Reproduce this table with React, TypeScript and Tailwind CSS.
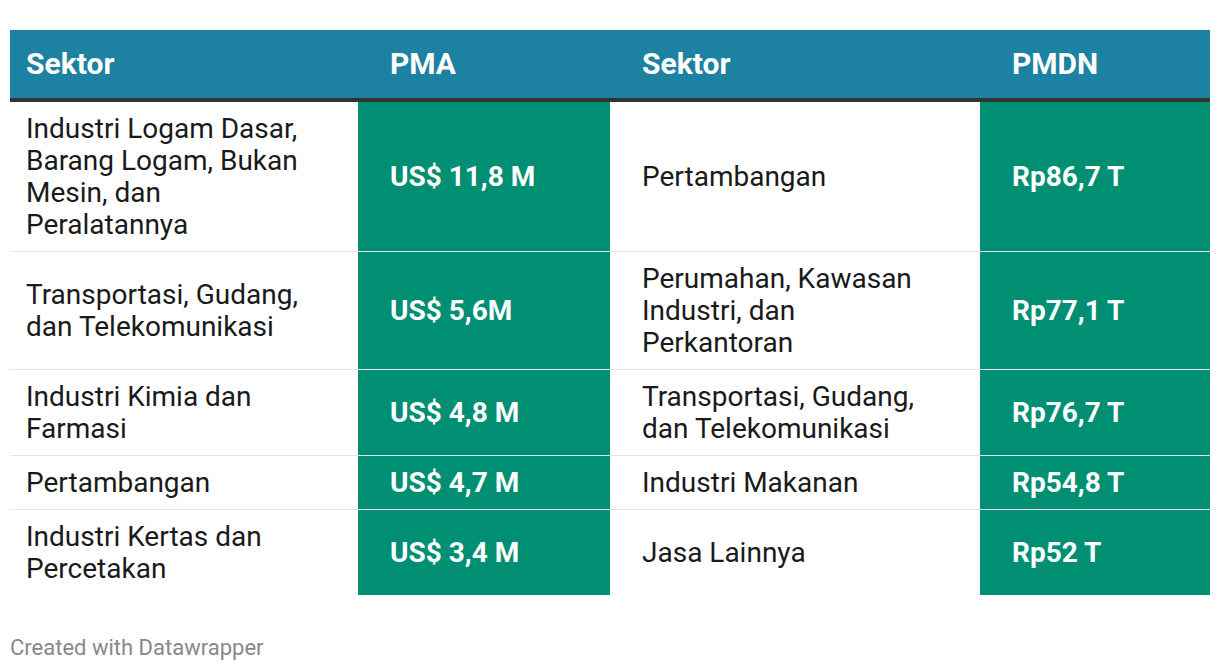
const rows = [
  {
    pmaSektor: "Industri Logam Dasar, Barang Logam, Bukan Mesin, dan Peralatannya",
    pma: "US$ 11,8 M",
    pmdnSektor: "Pertambangan",
    pmdn: "Rp86,7 T",
  },
  {
    pmaSektor: "Transportasi, Gudang, dan Telekomunikasi",
    pma: "US$ 5,6M",
    pmdnSektor: "Perumahan, Kawasan Industri, dan Perkantoran",
    pmdn: "Rp77,1 T",
  },
  {
    pmaSektor: "Industri Kimia dan Farmasi",
    pma: "US$ 4,8 M",
    pmdnSektor: "Transportasi, Gudang, dan Telekomunikasi",
    pmdn: "Rp76,7 T",
  },
  {
    pmaSektor: "Pertambangan",
    pma: "US$ 4,7 M",
    pmdnSektor: "Industri Makanan",
    pmdn: "Rp54,8 T",
  },
  {
    pmaSektor: "Industri Kertas dan Percetakan",
    pma: "US$ 3,4 M",
    pmdnSektor: "Jasa Lainnya",
    pmdn: "Rp52 T",
  },
];

export default function App() {
  return (
    <div className="w-[1220px] h-[670px] bg-white font-['Roboto',sans-serif] pt-[30px] px-[10px]">
      <table className="w-[1200px] border-collapse table-fixed">
        <colgroup>
          <col className="w-[348px]" />
          <col className="w-[252px]" />
          <col className="w-[370px]" />
          <col className="w-[230px]" />
        </colgroup>
        <thead>
          <tr className="bg-[#1d81a2] text-white border-b-4 border-[#333333]">
            {["Sektor", "PMA", "Sektor", "PMDN"].map((h, i) => (
              <th
                key={i}
                className={`h-[70px] pr-4 text-left text-[30px] font-bold leading-none ${i === 0 ? "pl-4" : "pl-8"}`}
              >
                {h}
              </th>
            ))}
          </tr>
        </thead>
        <tbody>
          {rows.map((r, i) => (
            <tr key={i} className={i < rows.length - 1 ? "border-b border-[#e6e6e6]" : ""}>
              <td className="pl-4 pr-12 py-[10.5px] text-[28px] leading-[32px] text-[#1a1a1a]">{r.pmaSektor}</td>
              <td className="pl-8 pr-4 py-[10.5px] text-[28px] leading-[32px] font-bold text-white bg-[#008f72]">{r.pma}</td>
              <td className="pl-8 pr-12 py-[10.5px] text-[28px] leading-[32px] text-[#1a1a1a]">{r.pmdnSektor}</td>
              <td className="pl-8 pr-4 py-[10.5px] text-[28px] leading-[32px] font-bold text-white bg-[#008f72]">{r.pmdn}</td>
            </tr>
          ))}
        </tbody>
      </table>
      <div className="mt-[40px] text-[22px] leading-[26px] text-[#888888]">Created with Datawrapper</div>
    </div>
  );
}
